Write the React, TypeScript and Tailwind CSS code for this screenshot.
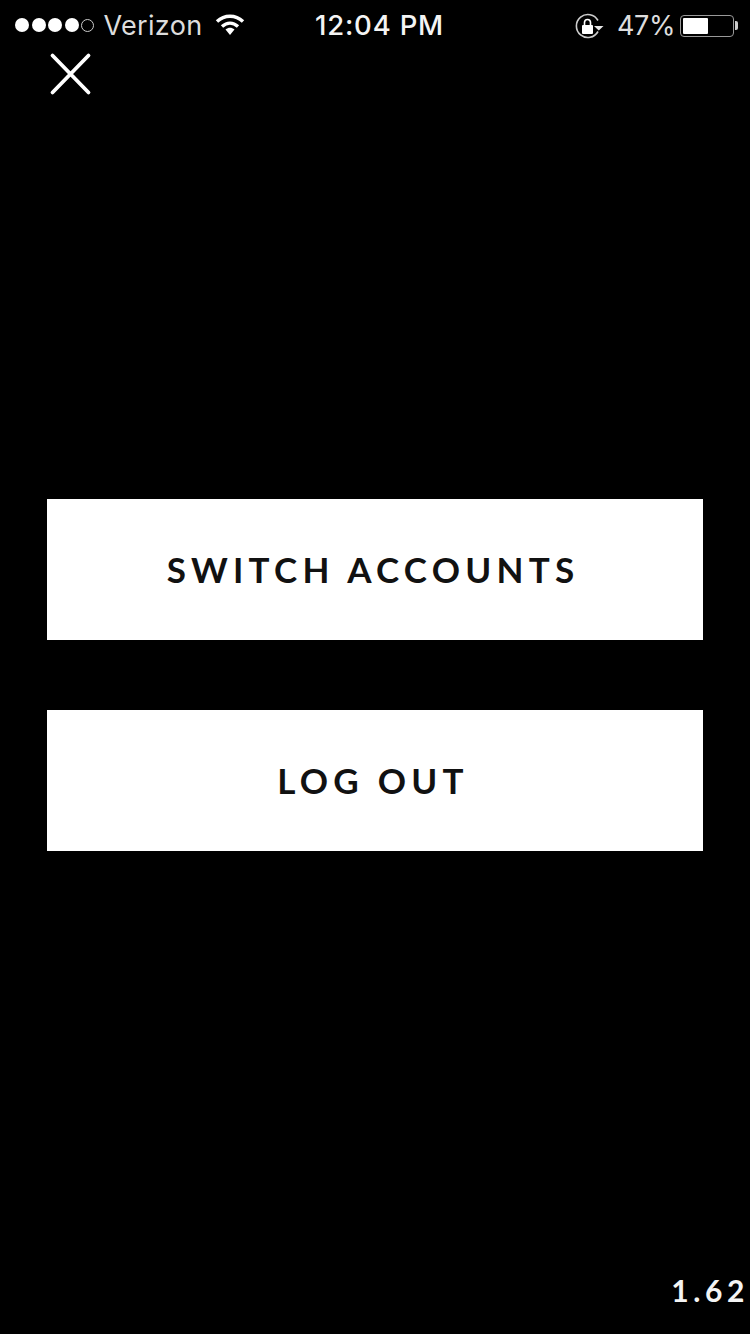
export default function App() {
  return (
    <div className="w-[750px] h-[1334px] bg-black flex flex-col text-white font-['Inter',sans-serif] overflow-hidden">
      <div className="h-[50px] flex items-center relative shrink-0">
        <div className="flex items-center pl-[15px] gap-[2.5px] w-[300px]">
          <span className="w-[14px] h-[14px] rounded-full bg-white" />
          <span className="w-[14px] h-[14px] rounded-full bg-white" />
          <span className="w-[14px] h-[14px] rounded-full bg-white" />
          <span className="w-[14px] h-[14px] rounded-full bg-white" />
          <span className="w-[13px] h-[13px] rounded-full border border-[#cccccc]" />
          <span className="text-[27px] ml-[7px] text-[#dddddd] leading-none tracking-[0.3px]">Verizon</span>
          <svg width="30" height="24" viewBox="0 0 30 24" className="ml-[10px]">
            <path d="M2 8.5 C9.5 1.5 20.5 1.5 28 8.5" fill="none" stroke="white" strokeWidth="3.4" />
            <path d="M7 13.5 C12 9 18 9 23 13.5" fill="none" stroke="white" strokeWidth="3.4" />
            <path d="M10.5 16.5 C13.5 14.2 16.5 14.2 19.5 16.5 L15 22 Z" fill="white" />
          </svg>
        </div>
        <div className="absolute left-[315px] top-[9px] text-[27.5px] font-medium leading-[33px] text-[#f4f4f4] tracking-[0.8px]">12:04 PM</div>
        <div className="absolute left-[575px] top-[12px] flex items-center">
          <svg width="30" height="26" viewBox="0 0 30 26">
            <path d="M23 18.5 A11.5 11.5 0 1 1 23 7.5" fill="none" stroke="#cccccc" strokeWidth="1.6" />
            <path d="M19 13 H28.5 L23.8 17.5 Z" fill="#e8e8e8" />
            <rect x="7" y="12" width="11" height="9" rx="1" fill="white" />
            <path d="M9.5 12 V9.5 a3 3 0 0 1 6 0 V12" fill="none" stroke="white" strokeWidth="1.6" />
          </svg>
          <span className="text-[27px] leading-none ml-[12px] text-[#dddddd] tracking-[-0.4px]">47%</span>
          <div className="ml-[5px] w-[54px] h-[22px] rounded-[4px] border border-[#999999] p-[2px]">
            <div className="w-[25px] h-full bg-white rounded-[1px]" />
          </div>
          <div className="w-[3px] h-[9px] bg-[#cccccc] rounded-r-[2px] ml-[1px]" />
        </div>
      </div>
      <div className="pl-[48px] shrink-0">
        <svg width="46" height="46" viewBox="0 0 46 46" className="block">
          <path d="M4.5 5.5 L40.5 42.5 M40.5 5.5 L4.5 42.5" stroke="white" strokeWidth="3.8" strokeLinecap="round" />
        </svg>
      </div>
      <div className="mt-[403px] mx-[47px] flex flex-col gap-[70px]">
        <button className="h-[141px] bg-white text-[#111111] font-['Lato',sans-serif] font-bold text-[35px] tracking-[5.25px] pr-[4px] flex items-center justify-center">SWITCH ACCOUNTS</button>
        <button className="h-[141px] bg-white text-[#111111] font-['Lato',sans-serif] font-bold text-[35px] tracking-[5.25px] pr-[4px] flex items-center justify-center">LOG OUT</button>
      </div>
      <div className="mt-auto mb-[26px] pr-[1px] text-right font-['Lato',sans-serif] font-bold text-[30px] leading-[36px] tracking-[4.6px] text-[#f4f4f4]">1.62</div>
    </div>
  );
}
